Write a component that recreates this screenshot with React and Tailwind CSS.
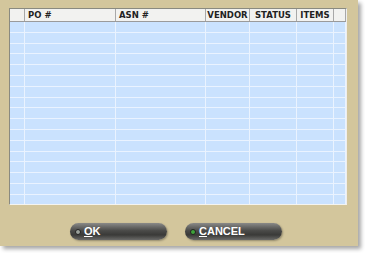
export default function App() {
  const rows = Array.from({ length: 17 });
  const cols = [
    { w: "w-[15px]", label: "" },
    { w: "w-[91px]", label: "PO #" },
    { w: "w-[90px]", label: "ASN #" },
    { w: "w-[44px]", label: "VENDOR" },
    { w: "w-[47px]", label: "STATUS" },
    { w: "w-[37px]", label: "ITEMS" },
    { w: "flex-1", label: "" },
  ];
  return (
    <div className="w-[365px] h-[253px] bg-white" style={{ fontFamily: "Tahoma, 'DejaVu Sans', sans-serif" }}>
      <div className="w-[358px] h-[246px] bg-[#d3c69c] shadow-[3px_3px_4px_rgba(0,0,0,0.35)] pt-[8px] pl-[9px] flex flex-col">
        <div className="w-[338px] h-[197px] bg-[#cae2fe] border-l border-t border-[#8a8a80] border-r border-r-[#eee] border-b border-b-[#f4f4f0] flex flex-col overflow-hidden">
          <div className="flex h-[13px] bg-[#f2f2f0] border-b border-[#9a9a9a]">
            {cols.map((c, i) => (
              <div
                key={i}
                className={`${c.w} shrink-0 border-r border-[#a8a8a8] text-[8.5px] font-bold text-[#222] leading-[12px] ${i >= 3 && i <= 5 ? "text-center" : "pl-[3px]"}`}
              >
                {c.label}
              </div>
            ))}
          </div>
          <div className="flex-1 flex flex-col">
            {rows.map((_, r) => (
              <div key={r} className="flex h-[10.8px] border-b border-[#eaf3ff]">
                {cols.map((c, i) => (
                  <div key={i} className={`${c.w} shrink-0 border-r border-[#eaf3ff]`} />
                ))}
              </div>
            ))}
          </div>
        </div>
        <div className="flex gap-[18px] pl-[61px] mt-[18px]">
          <Btn u="O" rest="K" dot="#9aa09a" />
          <Btn u="C" rest="ANCEL" dot="#3fa33a" />
        </div>
      </div>
    </div>
  );
}

function Btn({ u, rest, dot }) {
  return (
    <div className="w-[97px] h-[17px] rounded-full bg-[linear-gradient(to_bottom,#8a8a88_0%,#4a4a48_45%,#3a3a38_70%,#6a6a68_100%)] shadow-[1px_1px_2px_rgba(0,0,0,0.3)] flex items-center pl-[5px] gap-[3px]">
      <div className="w-[6px] h-[6px] rounded-full border border-[#222]" style={{ background: dot }} />
      <span className="text-white font-bold text-[11px] leading-none" style={{ fontFamily: "Arial, 'Liberation Sans', sans-serif" }}>
        <span className="underline">{u}</span>{rest}
      </span>
    </div>
  );
}
